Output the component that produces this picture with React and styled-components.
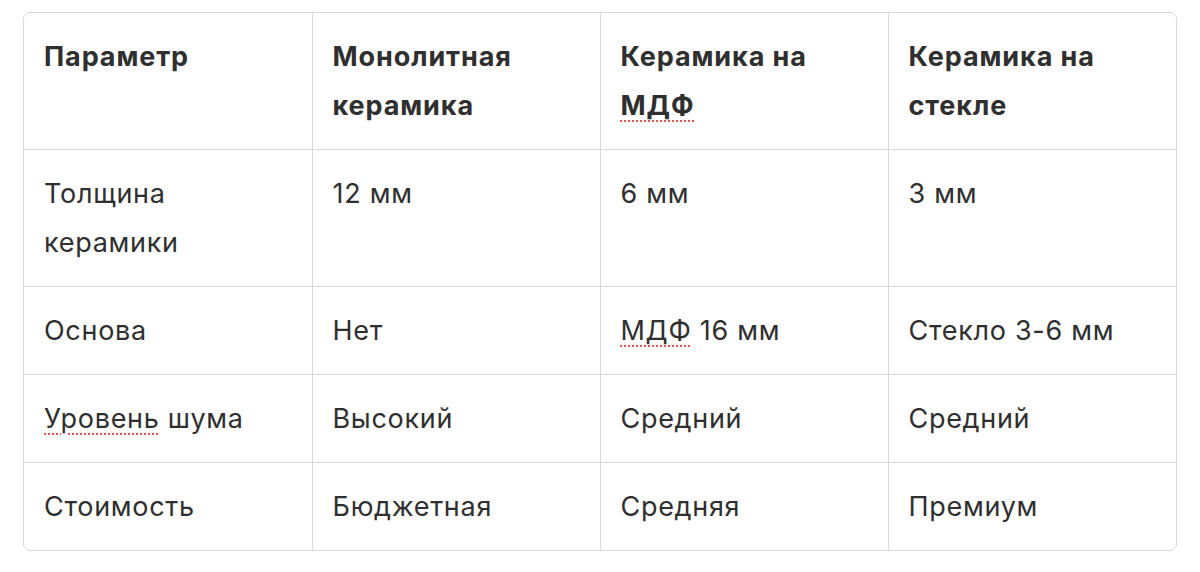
import React from 'react';
import styled, { createGlobalStyle } from 'styled-components';

const GlobalStyle = createGlobalStyle`
  html, body {
    margin: 0;
    padding: 0;
    background: #ffffff;
  }
  body {
    font-family: Inter, "Noto Sans", "Liberation Sans", sans-serif;
    color: #2f2f2f;
  }
`;

const Page = styled.div`
  padding: 12px 23px 0 23px;
  width: 1200px;
  box-sizing: border-box;
`;

const Frame = styled.div`
  border: 1px solid #d9d9d9;
  border-radius: 7px;
  overflow: hidden;
`;

const Table = styled.table`
  width: 100%;
  border-collapse: collapse;
  table-layout: fixed;
`;

const Cell = styled.td`
  padding: 19px 20px;
  font-size: 27px;
  line-height: 49px;
  letter-spacing: ${(p) => (p.$head ? '0.9px' : '0.7px')};
  font-weight: ${(p) => (p.$head ? 700 : 400)};
  vertical-align: top;
  text-align: left;
  border-right: 1px solid #d9d9d9;
  border-bottom: 1px solid #d9d9d9;
  color: #2f2f2f;

  &:last-child {
    border-right: none;
  }
  tr:last-child > & {
    border-bottom: none;
  }
`;

const Spell = styled.span`
  text-decoration: underline dotted #e8554b;
  text-decoration-thickness: 2px;
  text-underline-offset: 5px;
`;

const head = [
  'Параметр',
  <>Монолитная<br />керамика</>,
  <>Керамика на<br /><Spell>МДФ</Spell></>,
  <>Керамика на<br />стекле</>,
];

const rows = [
  [<>Толщина<br />керамики</>, '12 мм', '6 мм', '3 мм'],
  ['Основа', 'Нет', <><Spell>МДФ</Spell> 16 мм</>, 'Стекло 3-6 мм'],
  [<><Spell>Уровень</Spell> шума</>, 'Высокий', 'Средний', 'Средний'],
  ['Стоимость', 'Бюджетная', 'Средняя', 'Премиум'],
];

const App = () => (
  <Page>
    <GlobalStyle />
    <Frame>
      <Table>
        <tbody>
          <tr>
            {head.map((h, i) => (
              <Cell key={i} as="th" $head>{h}</Cell>
            ))}
          </tr>
          {rows.map((r, i) => (
            <tr key={i}>
              {r.map((c, j) => (
                <Cell key={j}>{c}</Cell>
              ))}
            </tr>
          ))}
        </tbody>
      </Table>
    </Frame>
  </Page>
);

export default App;
